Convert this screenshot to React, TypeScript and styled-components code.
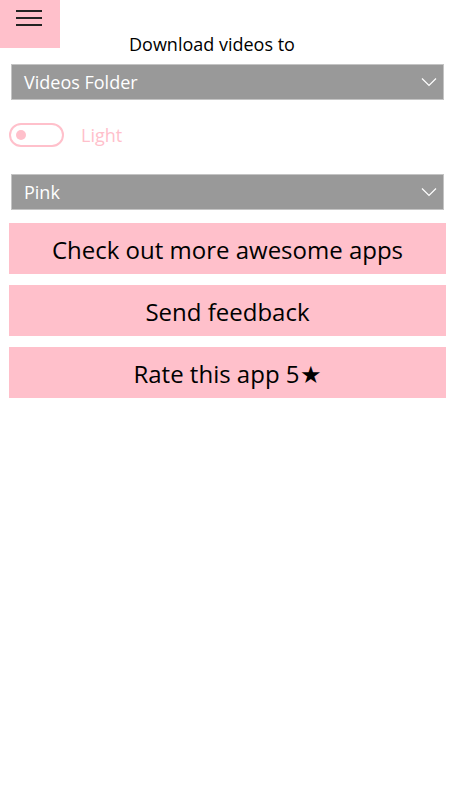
import React, { useState } from 'react';
import styled, { createGlobalStyle } from 'styled-components';

const GlobalStyle = createGlobalStyle`
  html, body {
    margin: 0;
    padding: 0;
    background: #ffffff;
    font-family: 'Open Sans', 'Noto Sans', sans-serif;
  }
`;

const PINK = '#ffc0cb';

export default function App() {
  const [dark, setDark] = useState(false);

  return (
    <Page>
      <GlobalStyle />
      <Header>
        <MenuButton aria-label="menu">
          <MenuLine />
          <MenuLine />
          <MenuLine />
        </MenuButton>
        <Title>Download videos to</Title>
      </Header>

      <Select $top={8}>
        <span>Videos Folder</span>
        <Chevron />
      </Select>

      <ToggleRow onClick={() => setDark(!dark)}>
        <Toggle>
          <Knob />
        </Toggle>
        <ToggleLabel>Light</ToggleLabel>
      </ToggleRow>

      <Select $top={27}>
        <span>Pink</span>
        <Chevron />
      </Select>

      <Buttons>
        <ActionButton>Check out more awesome apps</ActionButton>
        <ActionButton>Send feedback</ActionButton>
        <ActionButton>Rate this app 5★</ActionButton>
      </Buttons>
    </Page>
  );
}

function Chevron() {
  return (
    <ChevronSvg viewBox="0 0 16 10" width="16" height="10">
      <path d="M1 1.5 L8 8.5 L15 1.5" fill="none" stroke="#ffffff" strokeWidth="1.2" />
    </ChevronSvg>
  );
}

const Page = styled.div`
  width: 456px;
  min-height: 810px;
  display: flex;
  flex-direction: column;
  box-sizing: border-box;
`;

const Header = styled.div`
  display: flex;
  align-items: flex-start;
`;

const MenuButton = styled.div`
  width: 60px;
  height: 48px;
  background: ${PINK};
  display: flex;
  flex-direction: column;
  align-items: flex-start;
  padding: 10px 0 0 16px;
  gap: 5px;
  box-sizing: border-box;
`;

const MenuLine = styled.div`
  width: 26px;
  height: 2px;
  background: #222222;
`;

const Title = styled.div`
  margin: 32px 0 0 69px;
  font-size: 18px;
  line-height: 24px;
  color: #000000;
`;

const Select = styled.div<{ $top: number }>`
  margin: ${(p) => p.$top}px 12px 0 11px;
  height: 36px;
  background: #999999;
  border: 1px solid #c4c4c4;
  box-sizing: border-box;
  display: flex;
  align-items: center;
  justify-content: space-between;
  padding: 0 6px 0 12px;
  color: #ffffff;
  font-size: 18px;
`;

const ChevronSvg = styled.svg`
  display: block;
`;

const ToggleRow = styled.div`
  margin: 23px 0 0 9px;
  display: flex;
  align-items: center;
  gap: 17px;
  height: 24px;
  cursor: pointer;
`;

const Toggle = styled.div`
  width: 55px;
  height: 24px;
  border: 2px solid ${PINK};
  border-radius: 12px;
  box-sizing: border-box;
  display: flex;
  align-items: center;
  padding-left: 5px;
`;

const Knob = styled.div`
  width: 10px;
  height: 10px;
  border-radius: 50%;
  background: ${PINK};
`;

const ToggleLabel = styled.span`
  color: ${PINK};
  font-size: 18px;
`;

const Buttons = styled.div`
  margin: 13px 10px 0 9px;
  display: flex;
  flex-direction: column;
  gap: 11px;
`;

const ActionButton = styled.div`
  height: 51px;
  box-sizing: border-box;
  padding-top: 2px;
  background: ${PINK};
  display: flex;
  align-items: center;
  justify-content: center;
  font-size: 24px;
  color: #000000;
`;
